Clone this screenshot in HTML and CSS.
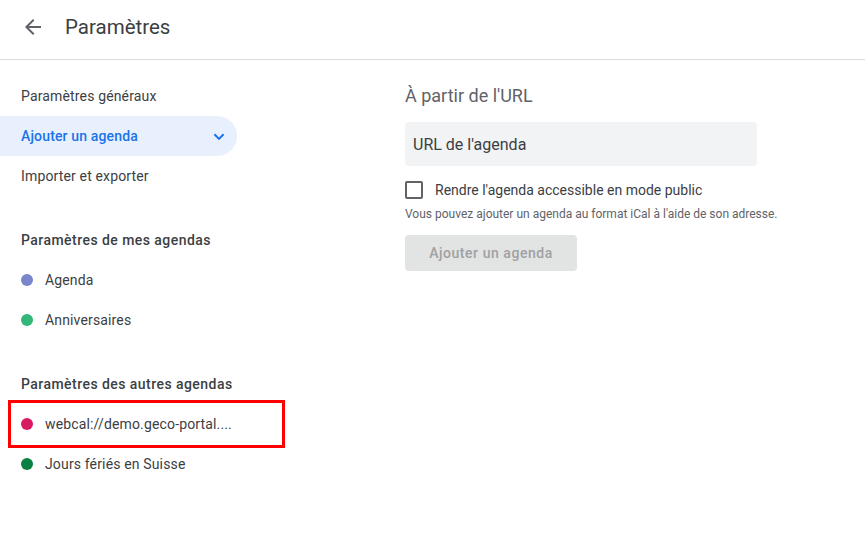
FILE: index.html
```html
<!DOCTYPE html>
<html lang="fr">
<head>
<meta charset="utf-8">
<title>Paramètres</title>
<link rel="stylesheet" href="styles.css">
</head>
<body>
<header class="topbar">
  <button class="back" aria-label="Retour">
    <svg width="24" height="24" viewBox="0 0 24 24"><path d="M20 11H7.83l5.59-5.59L12 4l-8 8 8 8 1.41-1.41L7.83 13H20v-2z" fill="#5f6368"/></svg>
  </button>
  <h1 class="title">Paramètres</h1>
</header>
<div class="layout">
  <nav class="sidebar">
    <div class="nav-item">Paramètres généraux</div>
    <div class="nav-item active">
      <span>Ajouter un agenda</span>
      <svg class="chev" width="12" height="8" viewBox="0 0 12 8"><path d="M1.4 1.3 6 5.9l4.6-4.6" fill="none" stroke="#1a73e8" stroke-width="2"/></svg>
    </div>
    <div class="nav-item">Importer et exporter</div>

    <div class="section">Paramètres de mes agendas</div>
    <div class="nav-item cal"><span class="dot" style="background:#7986cb"></span>Agenda</div>
    <div class="nav-item cal"><span class="dot" style="background:#33b679"></span>Anniversaires</div>

    <div class="section">Paramètres des autres agendas</div>
    <div class="nav-item cal marked"><span class="dot" style="background:#d81b60"></span>webcal://demo.geco-portal....</div>
    <div class="nav-item cal"><span class="dot" style="background:#0b8043"></span>Jours fériés en Suisse</div>
  </nav>
  <main class="content">
    <h2 class="heading">À partir de l'URL</h2>
    <div class="field">URL de l'agenda</div>
    <label class="check">
      <span class="box"></span>
      <span>Rendre l'agenda accessible en mode public</span>
    </label>
    <p class="hint">Vous pouvez ajouter un agenda au format iCal à l'aide de son adresse.</p>
    <button class="add">Ajouter un agenda</button>
  </main>
</div>
</body>
</html>
```
FILE: styles.css
```css
*, *::before, *::after { box-sizing: border-box; }
html, body { margin: 0; padding: 0; background: #fff; }
body {
  font-family: Roboto, "Liberation Sans", Arial, sans-serif;
  color: #3c4043;
  width: 865px;
  height: 551px;
  overflow: hidden;
}
.topbar {
  height: 60px;
  border-bottom: 1px solid #dadce0;
  display: flex;
  align-items: center;
  padding-left: 21px;
  padding-bottom: 5px;
}
.back {
  background: none;
  border: 0;
  padding: 0;
  width: 24px;
  height: 24px;
  display: flex;
  cursor: pointer;
}
.title {
  margin: 0 0 0 20px;
  font-size: 20.5px;
  font-weight: 400;
  color: #3c4043;
  letter-spacing: 0;
}
.layout {
  display: flex;
}
.sidebar {
  width: 237px;
  padding-top: 16px;
  display: flex;
  flex-direction: column;
}
.nav-item {
  height: 40px;
  display: flex;
  align-items: center;
  padding-left: 21px;
  font-size: 14px;
  letter-spacing: 0.15px;
  color: #3c4043;
  position: relative;
}
.nav-item.active {
  background: #e8f0fe;
  color: #1a73e8;
  font-weight: 500;
  border-radius: 0 20px 20px 0;
  justify-content: space-between;
  padding-right: 12px;
}
.chev { margin-top: 1px; }
.section {
  height: 40px;
  margin-top: 24px;
  display: flex;
  align-items: center;
  padding-left: 21px;
  font-size: 14px;
  font-weight: 500;
  color: #3c4043;
  letter-spacing: 0.45px;
}
.dot {
  width: 12px;
  height: 12px;
  border-radius: 50%;
  margin-right: 12px;
  flex: none;
}
.marked::after {
  content: "";
  position: absolute;
  left: 8px;
  top: -4px;
  width: 277px;
  height: 48px;
  border: 3px solid #ff0000;
}
.content {
  margin-left: 168px;
  padding-top: 24px;
  display: flex;
  flex-direction: column;
  align-items: flex-start;
}
.heading {
  margin: 0;
  height: 24px;
  line-height: 24px;
  font-size: 18px;
  font-weight: 400;
  color: #5f6368;
}
.field {
  margin-top: 14px;
  width: 352px;
  height: 44px;
  background: #f1f3f4;
  border-radius: 4px;
  display: flex;
  align-items: center;
  padding-left: 8px;
  font-size: 16px;
  color: #3c4043;
}
.check {
  margin-top: 15px;
  display: flex;
  align-items: center;
  font-size: 14px;
  color: #3c4043;
}
.box {
  width: 18px;
  height: 18px;
  border: 2px solid #5f6368;
  border-radius: 2px;
  margin-right: 12px;
}
.hint {
  margin: 7px 0 0;
  font-size: 12px;
  line-height: 16px;
  color: #5f6368;
}
.add {
  margin-top: 13px;
  width: 172px;
  height: 36px;
  border: 0;
  border-radius: 4px;
  background: #e2e3e3;
  color: #9fa1a3;
  font-family: Roboto, "Liberation Sans", Arial, sans-serif;
  font-size: 14px;
  font-weight: 500;
  letter-spacing: 0.55px;
  padding: 0;
}
```
